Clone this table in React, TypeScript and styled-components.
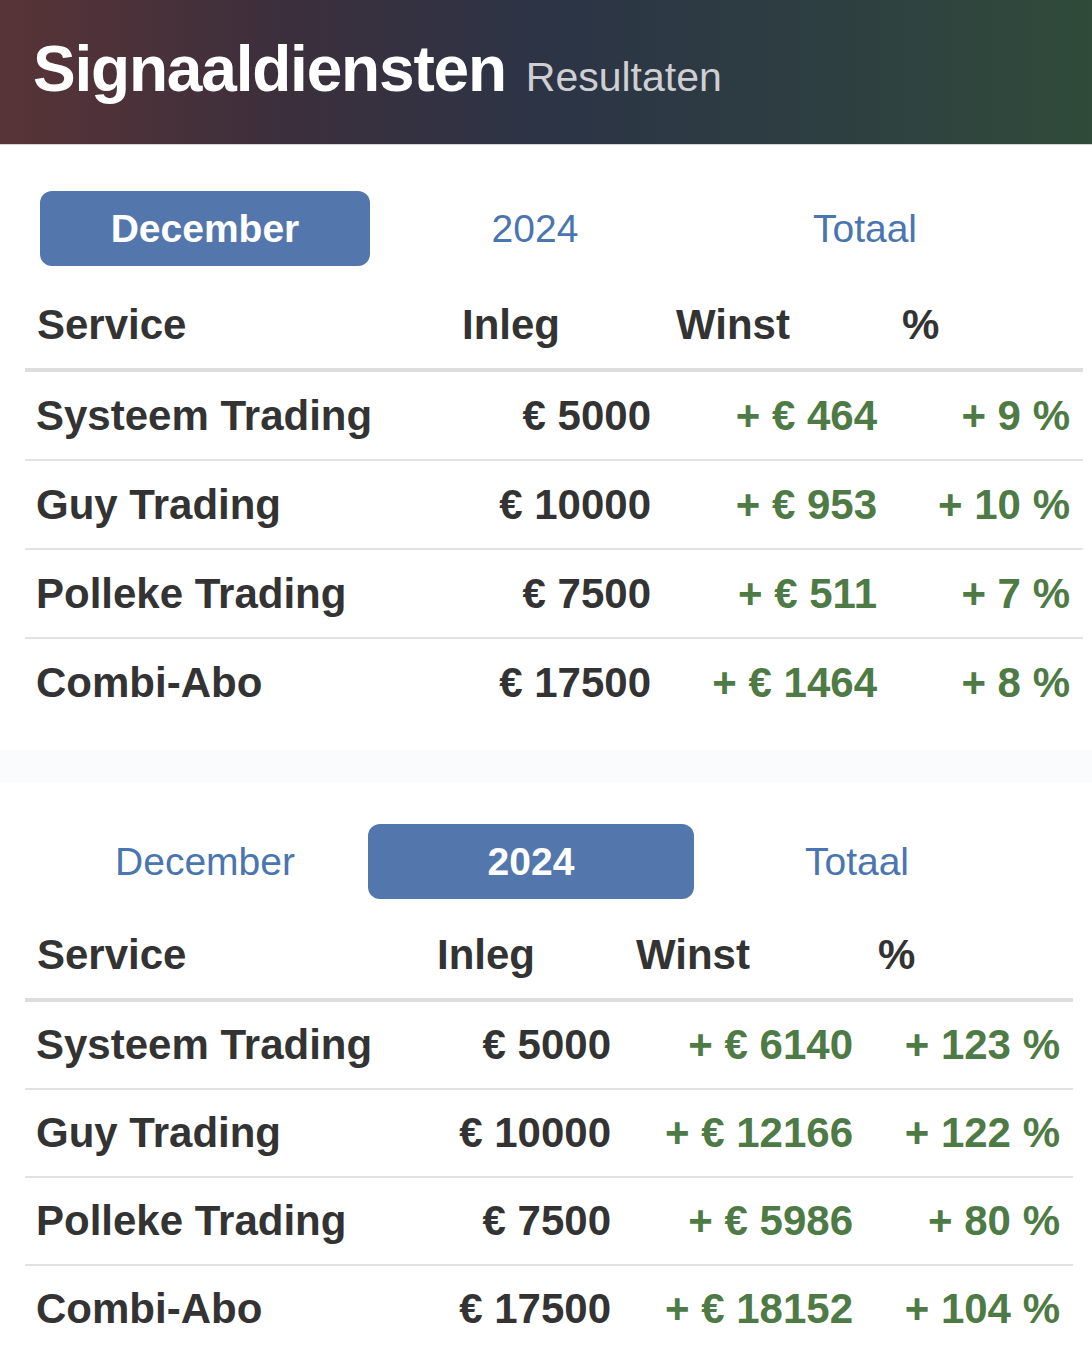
import React from "react";
import styled, { createGlobalStyle } from "styled-components";

const GlobalStyle = createGlobalStyle`
  html, body {
    margin: 0;
    padding: 0;
    background: #fafbfd;
    font-family: "Liberation Sans", Arial, sans-serif;
    color: #333;
  }
`;

const Header = styled.header`
  height: 145px;
  box-sizing: border-box;
  padding: 33px 0 0 33px;
  display: flex;
  align-items: baseline;
  gap: 20px;
  background: linear-gradient(
    90deg,
    #583437 0%,
    #3d2f3c 25%,
    #2c3446 50%,
    #2d3d42 72%,
    #304b3a 100%
  );
  border-bottom: 1px solid #d4d4d4;
`;

const Title = styled.h1`
  margin: 0;
  font-size: 64px;
  line-height: 1.15;
  font-weight: 700;
  letter-spacing: -1.2px;
  color: #fff;
`;

const Subtitle = styled.span`
  font-size: 41px;
  color: #cfcfd2;
`;

const Section = styled.section<{ $top: number; $bottom: number }>`
  background: #fff;
  padding: ${(p) => p.$top}px 0 ${(p) => p.$bottom}px;
`;

const Gap = styled.div`
  height: 32px;
`;

const Tabs = styled.div<{ $left: number; $width: number }>`
  display: grid;
  grid-template-columns: repeat(3, 1fr);
  margin-left: ${(p) => p.$left}px;
  width: ${(p) => p.$width}px;
`;

const Tab = styled.div<{ $active?: boolean }>`
  height: 75px;
  display: flex;
  align-items: center;
  justify-content: center;
  border-radius: 12px;
  font-size: 39px;
  font-weight: ${(p) => (p.$active ? 700 : 400)};
  color: ${(p) => (p.$active ? "#fff" : "#4a75b0")};
  background: ${(p) => (p.$active ? "#5377ad" : "transparent")};
`;

const Table = styled.div<{ $cols: string; $width: number; $gapTop: number }>`
  display: grid;
  grid-template-columns: ${(p) => p.$cols};
  width: ${(p) => p.$width}px;
  margin: ${(p) => p.$gapTop}px 0 0 25px;
`;

const HeadCell = styled.div`
  height: 86px;
  display: flex;
  align-items: center;
  padding: 0 12px;
  font-size: 42px;
  font-weight: 700;
  color: #333;
  border-bottom: 4px solid #dddddd;
`;

const Cell = styled.div<{
  $num?: boolean;
  $green?: boolean;
  $last?: boolean;
  $h: number;
}>`
  height: ${(p) => p.$h}px;
  display: flex;
  align-items: center;
  justify-content: ${(p) => (p.$num ? "flex-end" : "flex-start")};
  padding: 0 ${(p) => (p.$num ? 13 : 11)}px;
  font-size: 42px;
  font-weight: 700;
  white-space: nowrap;
  color: ${(p) => (p.$green ? "#4e7a45" : "#333")};
  border-bottom: 2px solid ${(p) => (p.$last ? "transparent" : "#e2e2e2")};
`;

type Row = [string, string, string, string];

const monthRows: Row[] = [
  ["Systeem Trading", "€ 5000", "+ € 464", "+ 9 %"],
  ["Guy Trading", "€ 10000", "+ € 953", "+ 10 %"],
  ["Polleke Trading", "€ 7500", "+ € 511", "+ 7 %"],
  ["Combi-Abo", "€ 17500", "+ € 1464", "+ 8 %"],
];

const yearRows: Row[] = [
  ["Systeem Trading", "€ 5000", "+ € 6140", "+ 123 %"],
  ["Guy Trading", "€ 10000", "+ € 12166", "+ 122 %"],
  ["Polleke Trading", "€ 7500", "+ € 5986", "+ 80 %"],
  ["Combi-Abo", "€ 17500", "+ € 18152", "+ 104 %"],
];

const tabNames = ["December", "2024", "Totaal"];

interface ResultsProps {
  active: number;
  rows: Row[];
  cols: string;
  width: number;
  tabLeft: number;
  tabWidth: number;
  top: number;
  bottom: number;
  gapTop: number;
  rowHeight: number;
}

const Results = (props: ResultsProps) => (
  <Section $top={props.top} $bottom={props.bottom}>
    <Tabs $left={props.tabLeft} $width={props.tabWidth}>
      {tabNames.map((name, i) => (
        <Tab key={name} $active={i === props.active}>
          {name}
        </Tab>
      ))}
    </Tabs>
    <Table $cols={props.cols} $width={props.width} $gapTop={props.gapTop}>
      <HeadCell>Service</HeadCell>
      <HeadCell>Inleg</HeadCell>
      <HeadCell>Winst</HeadCell>
      <HeadCell>%</HeadCell>
      {props.rows.map((row, r) => {
        const last = r === props.rows.length - 1;
        const h = props.rowHeight;
        return (
          <React.Fragment key={row[0]}>
            <Cell $h={h} $last={last}>
              {row[0]}
            </Cell>
            <Cell $h={h} $num $last={last}>
              {row[1]}
            </Cell>
            <Cell $h={h} $num $green $last={last}>
              {row[2]}
            </Cell>
            <Cell $h={h} $num $green $last={last}>
              {row[3]}
            </Cell>
          </React.Fragment>
        );
      })}
    </Table>
  </Section>
);

const App = () => {
  return (
    <React.Fragment>
      <GlobalStyle />
      <Header>
        <Title>Signaaldiensten</Title>
        <Subtitle>Resultaten</Subtitle>
      </Header>
      <Results
        active={0}
        rows={monthRows}
        cols="425px 214px 226px 193px"
        width={1058}
        tabLeft={40}
        tabWidth={990}
        top={46}
        bottom={22}
        gapTop={16}
        rowHeight={87}
      />
      <Gap />
      <Results
        active={1}
        rows={yearRows}
        cols="400px 199px 242px 207px"
        width={1048}
        tabLeft={42}
        tabWidth={978}
        top={42}
        bottom={22}
        gapTop={13}
        rowHeight={86}
      />
    </React.Fragment>
  );
};

export default App;
